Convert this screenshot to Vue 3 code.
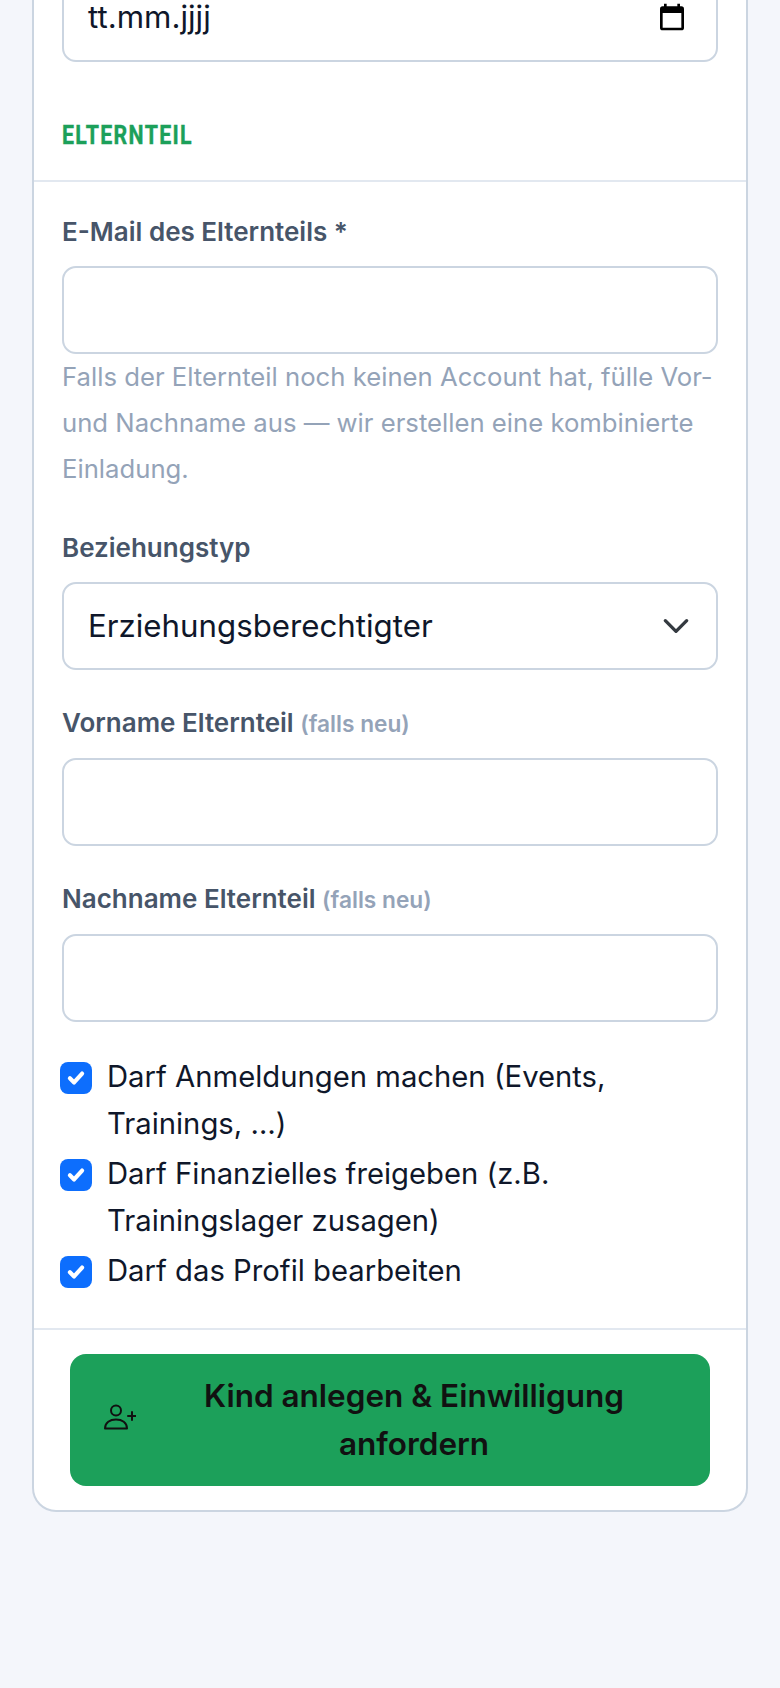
<script setup>
const permissions = [
  'Darf Anmeldungen machen (Events, Trainings, …)',
  'Darf Finanzielles freigeben (z.B. Trainingslager zusagen)',
  'Darf das Profil bearbeiten'
]
</script>

<template>
  <div class="page">
    <section class="card">
      <div class="date-wrap">
        <div class="input date">
          <span>tt.mm.jjjj</span>
          <svg class="cal" viewBox="0 0 24 24" width="32" height="32"><path d="M19 4h-1V2h-2v2H8V2H6v2H5a2 2 0 0 0-2 2v14a2 2 0 0 0 2 2h14a2 2 0 0 0 2-2V6a2 2 0 0 0-2-2zm0 16H5V9h14z" fill="#000"/></svg>
        </div>
      </div>
      <h2 class="section"><span>ELTERNTEIL</span></h2>
      <div class="body">
        <div class="field email">
          <label class="label">E-Mail des Elternteils *</label>
          <input class="input" type="email" />
          <p class="help">Falls der Elternteil noch keinen Account hat, fülle Vor- und Nachname aus — wir erstellen eine kombinierte Einladung.</p>
        </div>
        <div class="field relation">
          <label class="label">Beziehungstyp</label>
          <div class="input select">
            <span>Erziehungsberechtigter</span>
            <svg viewBox="0 0 24 24" width="32" height="32" fill="none" stroke="#343a40" stroke-width="2.500" stroke-linecap="round" stroke-linejoin="round"><path d="M4 8l8 8 8-8"/></svg>
          </div>
        </div>
        <div class="field first-name">
          <label class="label">Vorname Elternteil <small>(falls neu)</small></label>
          <input class="input" type="text" />
        </div>
        <div class="field last">
          <label class="label">Nachname Elternteil <small>(falls neu)</small></label>
          <input class="input" type="text" />
        </div>
        <div class="checks">
          <label v-for="p in permissions" :key="p" class="check">
            <span class="box">
              <svg viewBox="0 0 20 20" width="32" height="32" fill="none" stroke="#fff" stroke-width="2.600" stroke-linecap="round" stroke-linejoin="round"><path d="M6.200 10.200l2.600 2.600 5-5.600"/></svg>
            </span>
            <span>{{ p }}</span>
          </label>
        </div>
      </div>
      <div class="footer">
        <button class="submit" type="button">
          <svg class="add" viewBox="0 0 32 32" width="32" height="32" fill="none" stroke="#111" stroke-width="2" stroke-linecap="round" stroke-linejoin="round"><circle cx="12" cy="6.500" r="5"/><path d="M1 24.500c0-6 5-9 11-9s11 3 11 9zM24 12h8M28 8v8"/></svg>
          <span>Kind anlegen &amp; Einwilligung anfordern</span>
        </button>
      </div>
    </section>
  </div>
</template>

<style scoped>
.page {
  height: 1688px;
  overflow: hidden;
  background: #f4f6fb;
  padding: 0 32px;
  box-sizing: border-box;
  font-family: "Inter", "Lato", sans-serif;
  color: #0f172a;
}
.card {
  margin-top: -41px;
  background: #fff;
  border: 2px solid #cbd5e1;
  border-radius: 0 0 24px 24px;
}
.date-wrap { padding: 0 28px; }
.input {
  display: flex;
  align-items: center;
  justify-content: space-between;
  width: 100%;
  height: 88px;
  box-sizing: border-box;
  border: 2px solid #cbd5e1;
  border-radius: 14px;
  background: #fff;
  padding: 0 24px;
  font: inherit;
  font-size: 31.250px;
  color: #0f172a;
}
.date { height: 101px; padding-right: 28px; align-items: flex-start; }
.date span { margin-top: 34px; line-height: 40px; }
.cal { margin-top: 38px; }
.section {
  margin: 0;
  padding: 56px 28px 28px;
  border-bottom: 2px solid #e2e8f0;
  font-family: "Roboto", sans-serif;
  font-size: 26px;
  line-height: 34px;
  font-weight: 700;
  letter-spacing: 1.600px;
  color: #1ca05a;
  -webkit-text-stroke: 0.400px #1ca05a;
}
.section span {
  display: inline-block;
  transform: scaleX(0.82);
  transform-origin: left center;
}
.body { padding: 32px 28px 34px; }
.field { margin-bottom: 36px; }
.field.email { margin-bottom: 38px; }
.field.relation { margin-bottom: 35px; }
.field.first-name { margin-bottom: 35px; }
.field.last { margin-bottom: 31px; }
.label {
  display: block;
  margin-bottom: 16px;
  font-size: 26px;
  line-height: 36px;
  font-weight: 600;
  color: #475569;
}
.label small { font-size: 22.700px; color: #94a3b8; }
.help {
  margin: 0;
  font-size: 25.700px;
  line-height: 46px;
  color: #94a3b8;
}
.checks { display: flex; flex-direction: column; gap: 3px; }
.check {
  display: flex;
  gap: 15px;
  font-size: 29.250px;
  line-height: 47px;
  margin-left: -2px;
}
.box {
  flex: none;
  width: 32px;
  height: 32px;
  margin-top: 9px;
  border-radius: 8px;
  background: #0d6efd;
}
.box svg { display: block; }
.footer {
  padding: 24px 36px;
  border-top: 2px solid #e2e8f0;
}
.submit {
  display: flex;
  align-items: center;
  gap: 16px;
  width: 100%;
  box-sizing: border-box;
  padding: 18px 34px;
  border: 0;
  border-radius: 16px;
  background: #1ca05a;
  font-family: inherit;
  font-size: 31.500px;
  line-height: 48px;
  font-weight: 600;
  color: #111;
  text-align: center;
}
.submit span { flex: 1; }
.add { flex: none; }
</style>
